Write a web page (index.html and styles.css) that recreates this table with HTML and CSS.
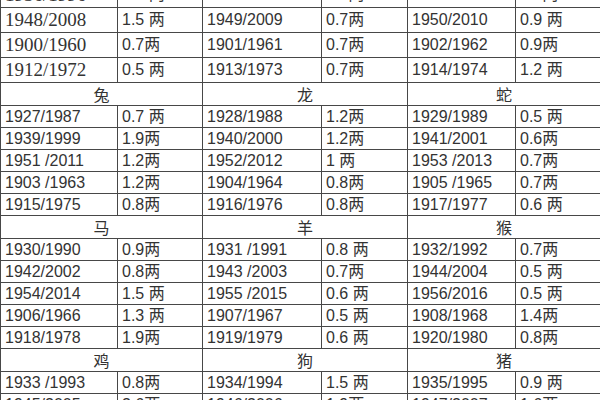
FILE: index.html
```html
<!DOCTYPE html>
<html lang="zh">
<head>
<meta charset="utf-8">
<link rel="stylesheet" href="styles.css">
</head>
<body>
<table class="chart">
<colgroup>
<col class="c-year1"><col class="c-wt1"><col class="c-year2"><col class="c-wt2"><col class="c-year3"><col class="c-wt3">
</colgroup>
<tbody>
<tr class="tall"><td class="serif">1936/1996</td><td>1.6 两</td><td>1937/1997</td><td>0.8两</td><td>1938/1998</td><td>0.8两</td></tr>
<tr class="tall"><td class="serif">1948/2008</td><td>1.5 两</td><td>1949/2009</td><td>0.7两</td><td>1950/2010</td><td>0.9 两</td></tr>
<tr class="tall"><td class="serif">1900/1960</td><td>0.7两</td><td>1901/1961</td><td>0.7两</td><td>1902/1962</td><td>0.9两</td></tr>
<tr class="tall"><td class="serif">1912/1972</td><td>0.5 两</td><td>1913/1973</td><td>0.7两</td><td>1914/1974</td><td>1.2 两</td></tr>
<tr class="head"><td colspan="2">兔</td><td colspan="2">龙</td><td colspan="2">蛇</td></tr>
<tr><td>1927/1987</td><td>0.7 两</td><td>1928/1988</td><td>1.2两</td><td>1929/1989</td><td>0.5 两</td></tr>
<tr><td>1939/1999</td><td>1.9两</td><td>1940/2000</td><td>1.2两</td><td>1941/2001</td><td>0.6两</td></tr>
<tr><td>1951 /2011</td><td>1.2两</td><td>1952/2012</td><td>1 两</td><td>1953 /2013</td><td>0.7两</td></tr>
<tr><td>1903 /1963</td><td>1.2两</td><td>1904/1964</td><td>0.8两</td><td>1905 /1965</td><td>0.7两</td></tr>
<tr><td>1915/1975</td><td>0.8两</td><td>1916/1976</td><td>0.8两</td><td>1917/1977</td><td>0.6 两</td></tr>
<tr class="head"><td colspan="2">马</td><td colspan="2">羊</td><td colspan="2">猴</td></tr>
<tr><td>1930/1990</td><td>0.9两</td><td>1931 /1991</td><td>0.8 两</td><td>1932/1992</td><td>0.7两</td></tr>
<tr><td>1942/2002</td><td>0.8两</td><td>1943 /2003</td><td>0.7两</td><td>1944/2004</td><td>0.5 两</td></tr>
<tr><td>1954/2014</td><td>1.5 两</td><td>1955 /2015</td><td>0.6 两</td><td>1956/2016</td><td>0.5 两</td></tr>
<tr><td>1906/1966</td><td>1.3 两</td><td>1907/1967</td><td>0.5 两</td><td>1908/1968</td><td>1.4两</td></tr>
<tr><td>1918/1978</td><td>1.9两</td><td>1919/1979</td><td>0.6 两</td><td>1920/1980</td><td>0.8两</td></tr>
<tr class="head"><td colspan="2">鸡</td><td colspan="2">狗</td><td colspan="2">猪</td></tr>
<tr><td>1933 /1993</td><td>0.8两</td><td>1934/1994</td><td>1.5 两</td><td>1935/1995</td><td>0.9 两</td></tr>
<tr><td>1945/2005</td><td>2.6两</td><td>1946/2006</td><td>1.9两</td><td>1947/2007</td><td>1.6两</td></tr>
</tbody>
</table>
</body>
</html>
```
FILE: styles.css
```css
html, body {
  margin: 0;
  padding: 0;
  background: #ffffff;
  overflow: hidden;
}

.chart {
  border-collapse: collapse;
  table-layout: fixed;
  width: 600px;
  margin-top: -18px;
  font-family: "Liberation Sans", "Noto Sans CJK SC", sans-serif;
  font-size: 16px;
  color: #333333;
}

.c-year1 { width: 117px; }
.c-wt1 { width: 85px; }
.c-year2 { width: 119px; }
.c-wt2 { width: 86px; }
.c-year3 { width: 108px; }
.c-wt3 { width: 85px; }

.chart td {
  border: 1px solid #474747;
  padding: 0 0 0 4px;
  height: 21px;
  line-height: 20px;
  white-space: nowrap;
  overflow: hidden;
  vertical-align: middle;
}

.chart tr.tall td {
  height: 24px;
}

.chart tr.head td {
  height: 22px;
  text-align: center;
  padding: 0;
  font-family: "Noto Sans CJK SC", sans-serif;
}

.chart td.serif {
  font-family: "Liberation Serif", "Noto Sans CJK SC", serif;
  font-size: 19px;
}
```
